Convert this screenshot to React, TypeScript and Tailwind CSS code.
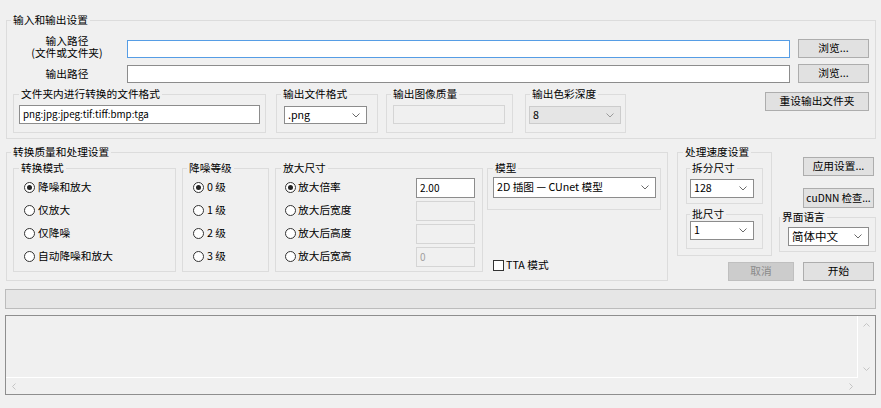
import React from 'react'
import clsx from 'clsx'

type GroupProps = {
  label: string
  className?: string
  legendClass?: string
  bodyClass?: string
  children?: React.ReactNode
}

const Group: React.FC<GroupProps> = ({ label, className, legendClass, bodyClass, children }) => (
  <fieldset className={clsx('border border-[#dcdcdc] p-0 m-0 min-w-0 shrink-0', className)}>
    <legend className={clsx('px-[2px] leading-[14px] whitespace-nowrap', legendClass)}>{label}</legend>
    <div className={bodyClass}>{children}</div>
  </fieldset>
)

const Chevron: React.FC<{ color?: string }> = ({ color = '#6a6a6a' }) => (
  <svg width="8" height="5" viewBox="0 0 8 5" className="shrink-0">
    <path d="M0.5 0.5 L4 4 L7.5 0.5" fill="none" stroke={color} strokeWidth="1" />
  </svg>
)

const Combo: React.FC<{ text: string; className?: string; disabled?: boolean }> = ({ text, className, disabled }) => (
  <div
    className={clsx(
      'flex items-center justify-between pl-[3px] pr-[6px] border shrink-0',
      disabled ? 'bg-[#e5e5e5] border-[#cccccc]' : 'bg-white border-[#8c8c8c]',
      className,
    )}
  >
    <span className="whitespace-nowrap leading-none">{text}</span>
    <Chevron color={disabled ? '#9a9a9a' : '#6a6a6a'} />
  </div>
)

const Button: React.FC<{ text: string; className?: string; disabled?: boolean }> = ({ text, className, disabled }) => (
  <div
    className={clsx(
      'flex items-center justify-center border shrink-0 leading-none whitespace-nowrap',
      disabled ? 'bg-[#cccccc] border-[#bfbfbf] text-[#8a8a8a]' : 'bg-[#e1e1e1] border-[#adadad]',
      className,
    )}
  >
    {text}
  </div>
)

const Radio: React.FC<{ checked?: boolean }> = ({ checked }) => (
  <span className="w-[11px] h-[11px] rounded-full border border-[#333333] bg-white flex items-center justify-center shrink-0">
    {checked && <span className="w-[5px] h-[5px] rounded-full bg-[#222222]" />}
  </span>
)

const modes = ['降噪和放大', '仅放大', '仅降噪', '自动降噪和放大']
const levels = ['0 级', '1 级', '2 级', '3 级']
const sizes = [
  { label: '放大倍率', value: '2.00', active: true },
  { label: '放大后宽度', value: '', active: false },
  { label: '放大后高度', value: '', active: false },
  { label: '放大后宽高', value: '0', active: false },
]

const App: React.FC = () => {
  return (
    <div
      className="w-[881px] h-[408px] bg-[#f0f0f0] overflow-hidden pt-[13px] text-[10.7px] text-black"
      style={{ fontFamily: '"Noto Sans CJK SC", "Noto Sans", sans-serif' }}
    >
      {/* 输入和输出设置 */}
      <Group label="输入和输出设置" className="ml-[6px] w-[870px] h-[126px]" legendClass="ml-[4px]" bodyClass="pt-[12px]">
        <div className="flex items-center h-[19px]">
          <div className="w-[120px] text-center leading-[12px] -mt-[3px] whitespace-pre-line">
            {'输入路径\n(文件或文件夹)'}
          </div>
          <div className="w-[663px] h-[18px] border border-[#569de5] bg-white" />
          <Button text="浏览..." className="ml-[8px] w-[71px] h-[19px]" />
        </div>
        <div className="flex items-center h-[19px] mt-[6px]">
          <div className="w-[120px] text-center leading-[12px]">输出路径</div>
          <div className="w-[663px] h-[18px] border border-[#8c8c8c] bg-white" />
          <Button text="浏览..." className="ml-[8px] w-[71px] h-[19px]" />
        </div>
        <div className="flex items-start mt-[4px]">
          <Group
            label="文件夹内进行转换的文件格式"
            className="ml-[6px] w-[253px] h-[46px]"
            legendClass="ml-[5px]"
            bodyClass="pt-[4px] pl-[5px]"
          >
            <div className="w-[241px] h-[19px] border border-[#8c8c8c] bg-white flex items-center pl-[3px] leading-none text-[9.8px]">
              png:jpg:jpeg:tif:tiff:bmp:tga
            </div>
          </Group>
          <Group label="输出文件格式" className="ml-[10px] w-[102px] h-[46px]" legendClass="ml-[4px]" bodyClass="pt-[5px] pl-[7px]">
            <Combo text=".png" className="w-[83px] h-[18px]" />
          </Group>
          <Group label="输出图像质量" className="ml-[8px] w-[127px] h-[46px]" legendClass="ml-[4px]" bodyClass="pt-[4px] pl-[6px]">
            <div className="w-[112px] h-[19px] border border-[#d5d5d5] bg-[#f0f0f0]" />
          </Group>
          <Group label="输出色彩深度" className="ml-[12px] w-[101px] h-[46px]" legendClass="ml-[4px]" bodyClass="pt-[5px] pl-[3px]">
            <Combo text="8" disabled className="w-[92px] h-[18px]" />
          </Group>
          <Button text="重设输出文件夹" className="ml-[139px] mt-[5px] w-[104px] h-[19px]" />
        </div>
      </Group>

      {/* 转换质量和处理设置 + 处理速度设置 */}
      <div className="flex items-start mt-[6px]">
        <Group
          label="转换质量和处理设置"
          className="ml-[6px] w-[662px] h-[136px]"
          legendClass="ml-[4px]"
          bodyClass="pt-[2px] flex items-start"
        >
          <Group label="转换模式" className="ml-[6px] w-[163px] h-[111px]" legendClass="ml-[5px]" bodyClass="pt-[1px] pl-[10px]">
            {modes.map((m, i) => (
              <div key={m} className="flex items-center h-[23px]">
                <Radio checked={i === 0} />
                <span className="ml-[3px] leading-none">{m}</span>
              </div>
            ))}
          </Group>
          <Group label="降噪等级" className="ml-[6px] w-[87px] h-[111px]" legendClass="ml-[4px]" bodyClass="pt-[1px] pl-[10px]">
            {levels.map((l, i) => (
              <div key={l} className="flex items-center h-[23px]">
                <Radio checked={i === 0} />
                <span className="ml-[3px] leading-none">{l}</span>
              </div>
            ))}
          </Group>
          <Group label="放大尺寸" className="ml-[6px] w-[208px] h-[111px]" legendClass="ml-[5px]" bodyClass="pt-[1px] pl-[9px] pr-[7px]">
            {sizes.map((s) => (
              <div key={s.label} className="flex items-center h-[23px]">
                <Radio checked={s.active} />
                <span className="ml-[2px] leading-none">{s.label}</span>
                <div
                  className={clsx(
                    'ml-auto w-[59px] h-[20px] border flex items-start pl-[3px] pt-[2px] leading-[14px] text-[10px]',
                    s.active ? 'bg-white border-[#8c8c8c]' : 'bg-[#f0f0f0] border-[#d5d5d5] text-[#a0a0a0]',
                  )}
                >
                  {s.value}
                </div>
              </div>
            ))}
          </Group>
          <div className="ml-[4px] flex flex-col">
            <Group label="模型" className="w-[174px] h-[49px]" legendClass="ml-[5px]" bodyClass="pt-[2px] pl-[5px]">
              <Combo text="2D 插图 — CUnet 模型" className="w-[163px] h-[21px]" />
            </Group>
            <div className="mt-[48px] ml-[6px] flex items-center h-[14px]">
              <span className="w-[11px] h-[11px] border border-[#333333] bg-white shrink-0" />
              <span className="ml-[2px] leading-none">TTA 模式</span>
            </div>
          </div>
        </Group>

        <div className="ml-[9px] flex flex-col">
          <div className="flex items-start">
            <Group label="处理速度设置" className="w-[95px] h-[111px]" legendClass="ml-[5px]" bodyClass="pt-[2px] pl-[8px]">
              <Group label="拆分尺寸" className="w-[77px] h-[43px]" legendClass="ml-[3px]" bodyClass="pt-[4px] pl-[3px]">
                <Combo text="128" className="w-[64px] h-[19px]" />
              </Group>
              <Group label="批尺寸" className="mt-[3px] w-[77px] h-[42px]" legendClass="ml-[3px]" bodyClass="pl-[3px]">
                <Combo text="1" className="w-[64px] h-[19px]" />
              </Group>
            </Group>
            <div className="ml-[7px] w-[97px] flex flex-col">
              <Button text="应用设置..." className="mt-[12px] ml-[24px] w-[71px] h-[19px]" />
              <Button text="cuDNN 检查..." className="mt-[12px] ml-[24px] w-[71px] h-[20px] text-[10.2px]" />
              <Group label="界面语言" className="mt-[2px] w-[97px] h-[42px]" legendClass="ml-0" bodyClass="pt-[3px] pl-[8px]">
                <Combo text="简体中文" className="w-[81px] h-[19px] text-[11.5px]" />
              </Group>
            </div>
          </div>
          <div className="mt-[6px] flex">
            <Button text="取消" disabled className="ml-[51px] w-[66px] h-[19px]" />
            <Button text="开始" className="ml-[9px] w-[71px] h-[19px]" />
          </div>
        </div>
      </div>

      {/* 进度条 */}
      <div className="mt-[8px] ml-[5px] w-[871px] h-[20px] border border-[#bcbcbc] bg-[#e6e6e6]" />

      {/* 日志 */}
      <div className="mt-[6px] ml-[5px] w-[871px] h-[80px] border border-[#8e8e8e] bg-[#f0f0f0] flex flex-col">
        <div className="flex flex-1 min-h-0">
          <div className="flex-1 border-r border-b border-white" />
          <div className="w-[17px] flex flex-col items-center justify-between py-[7px]">
            <svg width="7" height="4" viewBox="0 0 7 4">
              <path d="M0.5 3.5 L3.5 0.5 L6.5 3.5" fill="none" stroke="#c4c4c4" strokeWidth="1" />
            </svg>
            <svg width="7" height="4" viewBox="0 0 7 4">
              <path d="M0.5 0.5 L3.5 3.5 L6.5 0.5" fill="none" stroke="#c4c4c4" strokeWidth="1" />
            </svg>
          </div>
        </div>
        <div className="h-[16px] flex items-center justify-between pl-[6px] pr-[22px]">
          <svg width="4" height="7" viewBox="0 0 4 7">
            <path d="M3.5 0.5 L0.5 3.5 L3.5 6.5" fill="none" stroke="#c4c4c4" strokeWidth="1" />
          </svg>
          <svg width="4" height="7" viewBox="0 0 4 7">
            <path d="M0.5 0.5 L3.5 3.5 L0.5 6.5" fill="none" stroke="#c4c4c4" strokeWidth="1" />
          </svg>
        </div>
      </div>
    </div>
  )
}

export default App
